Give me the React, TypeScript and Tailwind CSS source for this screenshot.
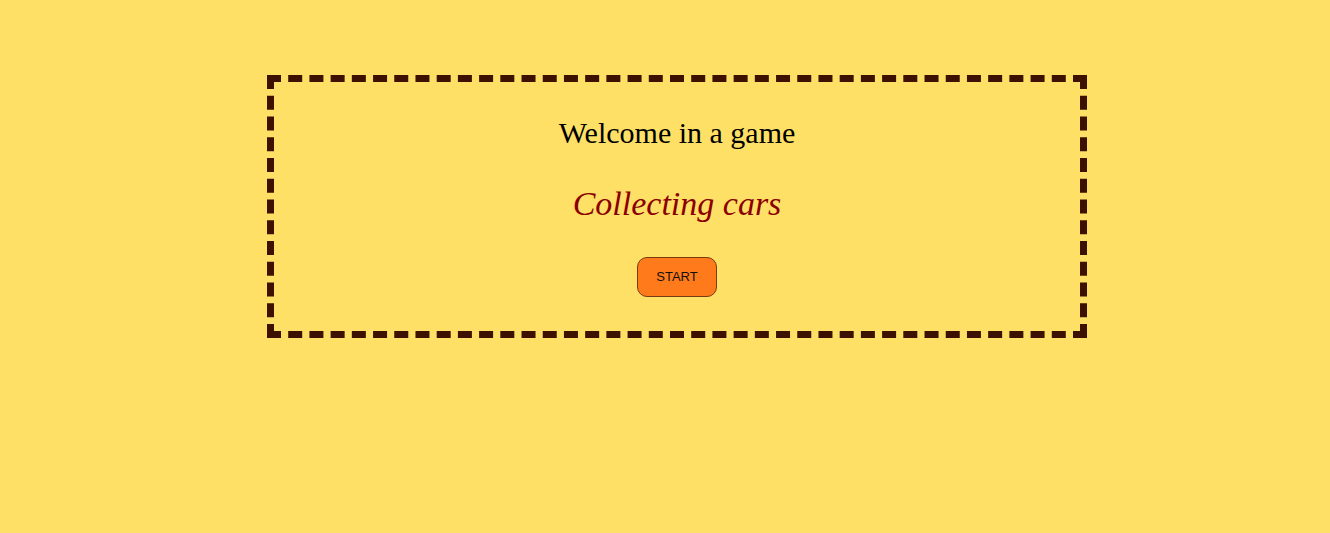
import React from 'react';

const App: React.FC = () => {
    return (
        <div className="min-h-[533px] w-full bg-[#ffe066] pt-[75px]">
            <div className="ml-[267px] flex w-[820px] flex-col items-center border-[7px] border-dashed border-[#3d1100] pt-[34px] pb-[34px]">
                <div className="text-[30px] leading-[34px] text-black [font-family:'Liberation_Serif',serif]">
                    Welcome in a game
                </div>
                <div className="mt-[35px] text-[34px] italic leading-[38px] text-[#8b0000] [font-family:'Liberation_Serif',serif]">
                    Collecting cars
                </div>
                <button className="mt-[34px] h-[40px] w-[80px] rounded-[10px] border border-[#7a3a10] bg-[#ff7a1a] text-[13px] text-[#111] [font-family:'Liberation_Sans',sans-serif]">
                    START
                </button>
            </div>
        </div>
    );
};

export default App;
